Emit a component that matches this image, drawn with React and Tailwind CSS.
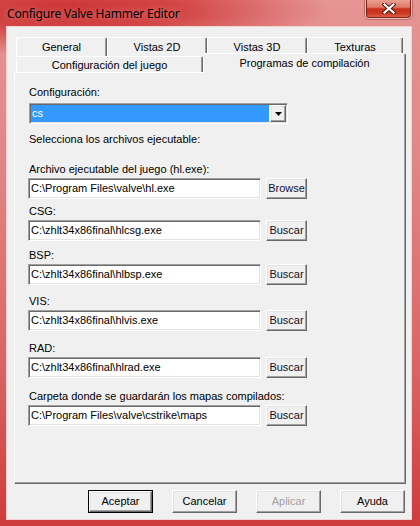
import React from "react";

const raised =
  "border border-t-white border-l-white border-r-[#696969] border-b-[#696969] shadow-[inset_-1px_-1px_0_#a0a0a0,inset_1px_1px_0_#e3e3e3]";
const sunken =
  "border border-t-[#a0a0a0] border-l-[#a0a0a0] border-r-white border-b-white shadow-[inset_1px_1px_0_#696969,inset_-1px_-1px_0_#e3e3e3]";

const FIELDS = [
  { label: "Archivo ejecutable del juego (hl.exe):", value: "C:\\Program Files\\valve\\hl.exe", button: "Browse", gap: "mt-[17px]" },
  { label: "CSG:", value: "C:\\zhlt34x86final\\hlcsg.exe", button: "Buscar", gap: "mt-[6px]" },
  { label: "BSP:", value: "C:\\zhlt34x86final\\hlbsp.exe", button: "Buscar", gap: "mt-[8px]" },
  { label: "VIS:", value: "C:\\zhlt34x86final\\hlvis.exe", button: "Buscar", gap: "mt-[10px]" },
  { label: "RAD:", value: "C:\\zhlt34x86final\\hlrad.exe", button: "Buscar", gap: "mt-[11px]" },
  { label: "Carpeta donde se guardarán los mapas compilados:", value: "C:\\Program Files\\valve\\cstrike\\maps", button: "Buscar", gap: "mt-[12px]" },
];

const BACK_TABS = [
  { name: "General", w: "w-[91px]" },
  { name: "Vistas 2D", w: "w-[100px]" },
  { name: "Vistas 3D", w: "w-[100px]" },
  { name: "Texturas", w: "w-[96px]" },
];

function Tab({ children, className = "" }) {
  return (
    <div
      className={`flex justify-center bg-[#f0f0f0] border-t border-l border-r border-t-white border-l-white border-r-[#696969] shadow-[inset_-1px_0_0_#a0a0a0] rounded-t-[2px] ${className}`}
    >
      {children}
    </div>
  );
}

function FileRow({ label, value, button, gap }) {
  return (
    <div className={`flex flex-col ${gap}`}>
      <span className="h-[13px] pl-[1px]">{label}</span>
      <div className="flex items-center gap-[5px] mt-[2px]">
        <div className={`w-[233px] h-[21px] bg-white flex items-center pl-[2px] ${sunken}`}>
          <span className="whitespace-nowrap">{value}</span>
        </div>
        <button className={`w-[41px] h-[21px] bg-[#f0f0f0] flex items-center justify-center text-[#10102a] ${raised}`}>
          {button}
        </button>
      </div>
    </div>
  );
}

function DialogButton({ children, isDefault, disabled }) {
  return (
    <div className={`w-[65px] h-[23px] ${isDefault ? "border border-black" : ""}`}>
      <button
        className={`w-full h-full bg-[#f0f0f0] flex items-center justify-center ${raised} ${
          disabled ? "text-[#a0a0a0]" : "text-black"
        }`}
      >
        {children}
      </button>
    </div>
  );
}

export default function App() {
  return (
    <div className="w-[420px] h-[526px] flex flex-col pl-[6px] pr-[8px] pb-[6px] overflow-hidden text-[11px] leading-[13px] text-black font-['Liberation_Sans',Arial,sans-serif] bg-[radial-gradient(260px_46px_at_70px_10px,#cd3434_0%,#d44848_45%,rgba(226,130,130,0)_100%),linear-gradient(180deg,#e69494_0%,#e28686_30%,#da6464_70%,#cf3b3b_100%)]">
      {/* title bar */}
      <div className="h-[26px] flex items-start shrink-0">
        <span className="pl-[1px] pt-[6px] text-[12px] leading-[15px] tracking-[-0.2px] text-black font-['Noto_Sans','Open_Sans',sans-serif] [text-shadow:0_0_6px_rgba(255,220,220,0.5)]">
          Configure Valve Hammer Editor
        </span>
        <div className="ml-auto w-[47px] h-[19px] rounded-b-[5px] border border-t-0 border-[#f2c4bc] shadow-[0_0_0_1px_rgba(110,30,20,0.35)]">
          <div className="w-full h-full rounded-b-[4px] border border-t-0 border-[#7c2218] bg-[linear-gradient(180deg,#eaa090_0%,#df7a66_42%,#c8301c_52%,#cc3a24_80%,#e0604a_100%)] flex items-center justify-center">
            <svg width="14" height="11" viewBox="0 0 14 11">
              <path d="M2.5 1.5 L11.5 9.5 M11.5 1.5 L2.5 9.5" stroke="#4a140c" strokeWidth="4" strokeLinecap="square" />
              <path d="M2.5 1.5 L11.5 9.5 M11.5 1.5 L2.5 9.5" stroke="#ffffff" strokeWidth="2.2" strokeLinecap="square" />
            </svg>
          </div>
        </div>
      </div>

      {/* client area */}
      <div className="flex-1 flex flex-col border border-[#f4d2d2] bg-[#f0f0f0] pl-[7px] pr-[6px] pt-[10px] pb-[6px]">
        {/* tab rows */}
        <div className="w-[392px] flex flex-col">
          <div className="flex h-[19px] ml-[2px]">
            {BACK_TABS.map((t) => (
              <Tab key={t.name} className={`${t.w} h-[19px] pt-[3px]`}>
                {t.name}
              </Tab>
            ))}
          </div>
          <div className="flex h-[16px] ml-[2px] items-start">
            <Tab className="w-[187px] h-[16px] pt-[2px]">Configuración del juego</Tab>
            <Tab className="relative z-10 w-[203px] h-[20px] -mt-[3px] pt-[3px]">Programas de compilación</Tab>
          </div>

          {/* panel */}
          <div className="h-[412px] flex flex-col border border-t-white border-l-white border-r-[#696969] border-b-[#696969] shadow-[inset_-1px_-1px_0_#a0a0a0] pl-[13px] pt-[13px]">
            <span className="h-[13px] pl-[1px]">Configuración:</span>
            <div className={`ml-[1px] mt-[4px] w-[259px] h-[21px] bg-white flex p-px ${sunken}`}>
              <div className="flex-1 bg-[#3399ff] text-white flex items-center pl-[1px]">cs</div>
              <div className={`ml-px w-[16px] h-full bg-[#f0f0f0] flex items-center justify-center ${raised}`}>
                <svg width="7" height="4" viewBox="0 0 7 4">
                  <path d="M0 0 H7 L3.5 4 Z" fill="#000" />
                </svg>
              </div>
            </div>
            <span className="mt-[9px] h-[13px] pl-[1px]">Selecciona los archivos ejecutable:</span>
            {FIELDS.map((f) => (
              <FileRow key={f.label} {...f} />
            ))}
          </div>
        </div>

        {/* buttons */}
        <div className="mt-[6px] flex justify-end gap-[19px] pr-[0px]">
          <DialogButton isDefault>Aceptar</DialogButton>
          <DialogButton>Cancelar</DialogButton>
          <DialogButton disabled>Aplicar</DialogButton>
          <DialogButton>Ayuda</DialogButton>
        </div>
      </div>
    </div>
  );
}
